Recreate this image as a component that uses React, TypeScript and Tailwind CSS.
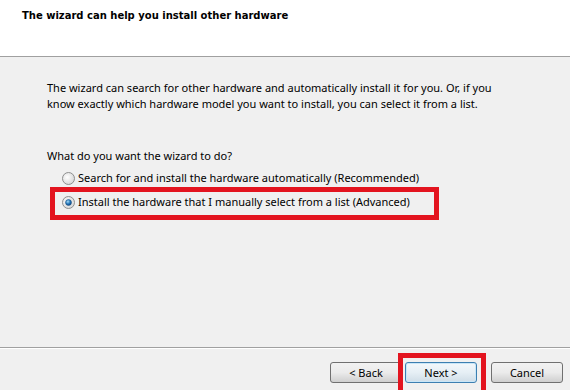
export default function App() {
  return (
    <div
      className="relative w-[570px] h-[390px] overflow-hidden bg-[#f0f0f0] text-[11px] text-black"
      style={{ fontFamily: '"Noto Sans", "Open Sans", sans-serif' }}
    >
      {/* Header */}
      <div className="h-[57px] bg-white border-b border-[#a0a0a0] pl-[22px] pt-[8px]">
        <div className="font-bold text-[10px]" style={{ fontFamily: '"DejaVu Sans", sans-serif' }}>
          The wizard can help you install other hardware
        </div>
      </div>

      {/* Body */}
      <div className="h-[290px] pl-[47px] pt-[23px] leading-[16px]">
        <p>
          The wizard can search for other hardware and automatically install it for you. Or, if you
          <br />
          know exactly which hardware model you want to install, you can select it from a list.
        </p>
        <p className="mt-[36px]">What do you want the wizard to do?</p>
        <div className="mt-[6px] pl-[15px] flex flex-col gap-[8px]">
          <label className="flex items-center gap-[3px]">
            <Radio />
            <span>Search for and install the hardware automatically (Recommended)</span>
          </label>
          <label className="flex items-center gap-[3px]">
            <Radio checked />
            <span>Install the hardware that I manually select from a list (Advanced)</span>
          </label>
        </div>
      </div>

      {/* Footer */}
      <div className="border-t border-[#a0a0a0] shadow-[inset_0_1px_0_#ffffff] h-[43px] flex justify-end items-start pt-[14px] pr-[7px]">
        <Btn label="< Back" className="mr-[3px]" />
        <Btn label="Next >" focused className="mr-[14px]" />
        <Btn label="Cancel" />
      </div>

      {/* Annotation boxes */}
      <div className="absolute left-[50px] top-[187px] w-[389px] h-[33px] border-[5px] border-[#e3141f]" />
      <div className="absolute left-[398px] top-[353px] w-[88px] h-[42px] border-[5px] border-[#e3141f]" />
    </div>
  );
}

function Radio({ checked = false }: { checked?: boolean }) {
  const bg = checked ? "rc" : "ru";
  return (
    <svg width="13" height="13" viewBox="0 0 13 13">
      <defs>
        <radialGradient id={bg} cx="40%" cy="40%" r="70%">
          <stop offset="0%" stopColor="#ffffff" />
          <stop offset="100%" stopColor="#d2d2d2" />
        </radialGradient>
        <radialGradient id="dot" cx="40%" cy="35%" r="70%">
          <stop offset="0%" stopColor="#a6dcf7" />
          <stop offset="55%" stopColor="#2375b8" />
          <stop offset="100%" stopColor="#0a3f7a" />
        </radialGradient>
      </defs>
      <circle cx="6.5" cy="6.5" r="6" fill={`url(#${bg})`} stroke="#8e8f8f" strokeWidth="1" />
      {checked && <circle cx="6.5" cy="6.5" r="3" fill="url(#dot)" stroke="#1b4e7f" strokeWidth="0.5" />}
    </svg>
  );
}

function Btn({ label, focused = false, className = "" }: { label: string; focused?: boolean; className?: string }) {
  return (
    <button
      className={`w-[72px] h-[21px] rounded-[3px] border text-[11px] leading-none ${
        focused
          ? "border-[#3c7fb1] bg-gradient-to-b from-[#f3f8fb] via-[#e6eff5] to-[#cfdde7] shadow-[inset_0_0_0_1px_#c9e6f7]"
          : "border-[#707070] bg-gradient-to-b from-[#f2f2f2] via-[#ebebeb] to-[#cfcfcf]"
      } ${className}`}
    >
      {label}
    </button>
  );
}
